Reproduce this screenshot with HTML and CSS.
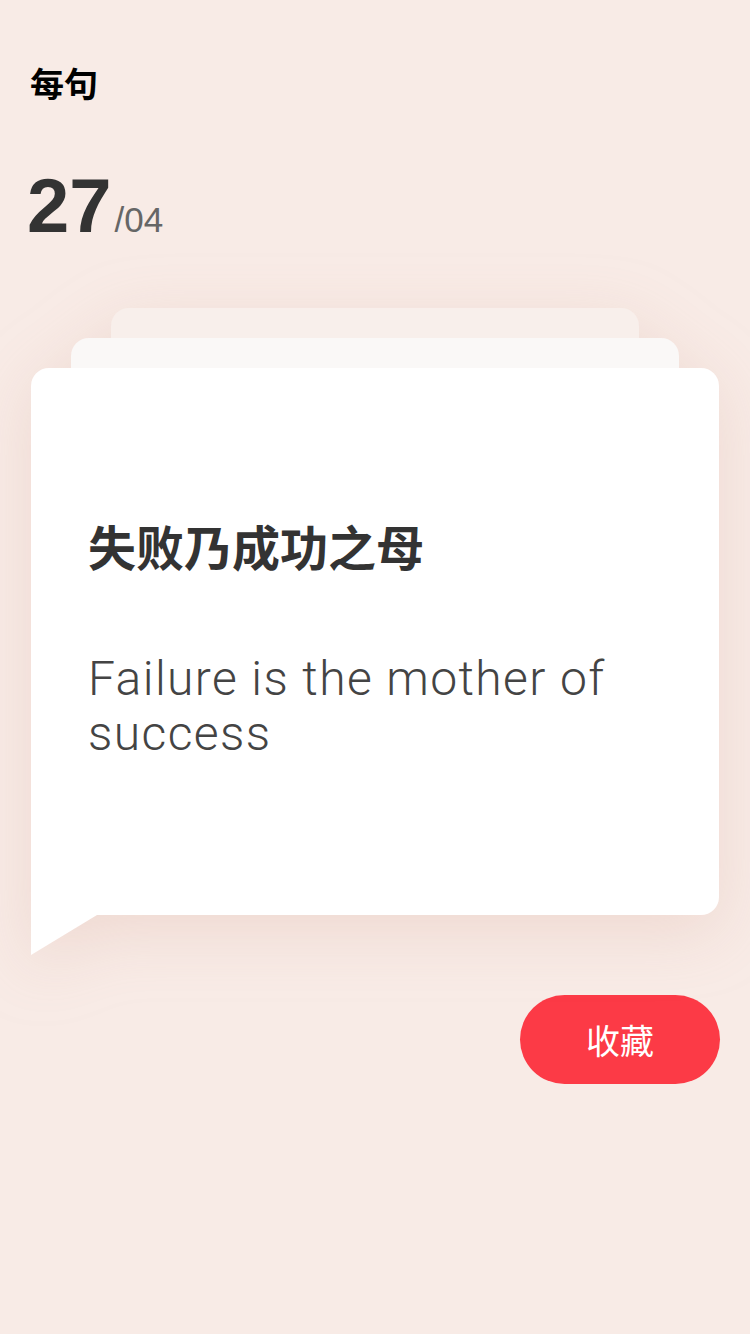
FILE: index.html
```html
<!DOCTYPE html>
<html lang="zh">
<head>
<meta charset="utf-8">
<title>每句</title>
<link rel="stylesheet" href="styles.css">
</head>
<body>
<div class="page">
  <header class="header">
    <h1 class="title">每句</h1>
    <div class="date"><span class="day">27</span><span class="month">/04</span></div>
  </header>
  <section class="stack">
    <div class="layer layer-back"></div>
    <div class="layer layer-mid"></div>
    <article class="card">
      <h2 class="quote-cn">失败乃成功之母</h2>
      <p class="quote-en">Failure is the mother of success</p>
    </article>
  </section>
  <div class="actions">
    <button class="fav-btn">收藏</button>
  </div>
</div>
</body>
</html>
```
FILE: styles.css
```css
* { box-sizing: border-box; }
html, body {
  margin: 0;
  padding: 0;
  background: #f8ebe6;
}
body {
  font-family: "Liberation Sans", "Noto Sans CJK SC", sans-serif;
  width: 750px;
  height: 1334px;
  overflow: hidden;
}
.page {
  display: flex;
  flex-direction: column;
}
.header {
  padding: 60px 30px 0;
}
.title {
  margin: 0;
  font-family: "Noto Sans CJK SC", sans-serif;
  font-size: 34px;
  font-weight: 700;
  line-height: 46px;
  color: #000;
}
.date {
  margin-top: 60px;
  display: flex;
  align-items: baseline;
  margin-left: -3px;
}
.day {
  font-family: "Liberation Sans", sans-serif;
  font-size: 76px;
  font-weight: 700;
  line-height: 80px;
  color: #333;
}
.month {
  font-family: "Liberation Sans", sans-serif;
  font-size: 35px;
  color: #666;
  margin-left: 3px;
}
.stack {
  position: relative;
  margin-top: 62px;
  padding-top: 60px;
  filter: drop-shadow(0 16px 32px rgba(214, 170, 155, 0.28));
}
.layer {
  position: absolute;
  height: 120px;
  border-radius: 18px 18px 0 0;
}
.layer-back {
  top: 0;
  left: 111px;
  right: 111px;
  background: #f8efeb;
}
.layer-mid {
  top: 30px;
  left: 71px;
  right: 71px;
  background: #faf8f7;
}
.card {
  position: relative;
  margin: 0 31px;
  height: 547px;
  background: #fff;
  border-radius: 18px 18px 18px 0;
  padding: 145px 57px 0;
}
.card::after {
  content: "";
  position: absolute;
  top: 100%;
  left: 0;
  width: 66px;
  height: 40px;
  background: #fff;
  clip-path: polygon(0 0, 100% 0, 0 100%);
}
.quote-cn {
  margin: 0;
  font-family: "Noto Sans CJK SC", sans-serif;
  font-size: 48px;
  font-weight: 700;
  line-height: 64px;
  color: #333;
}
.quote-en {
  margin: 74px 0 0;
  font-family: Roboto, sans-serif;
  font-weight: 300;
  font-size: 48px;
  line-height: 55px;
  letter-spacing: 1.4px;
  color: #444;
}
.actions {
  display: flex;
  justify-content: flex-end;
  padding: 80px 30px 0;
}
.fav-btn {
  width: 200px;
  height: 89px;
  border: none;
  border-radius: 45px;
  background: #fc3a46;
  color: #fff;
  font-family: "Noto Sans CJK SC", sans-serif;
  font-size: 34px;
  font-weight: 400;
  padding: 0;
}
```
